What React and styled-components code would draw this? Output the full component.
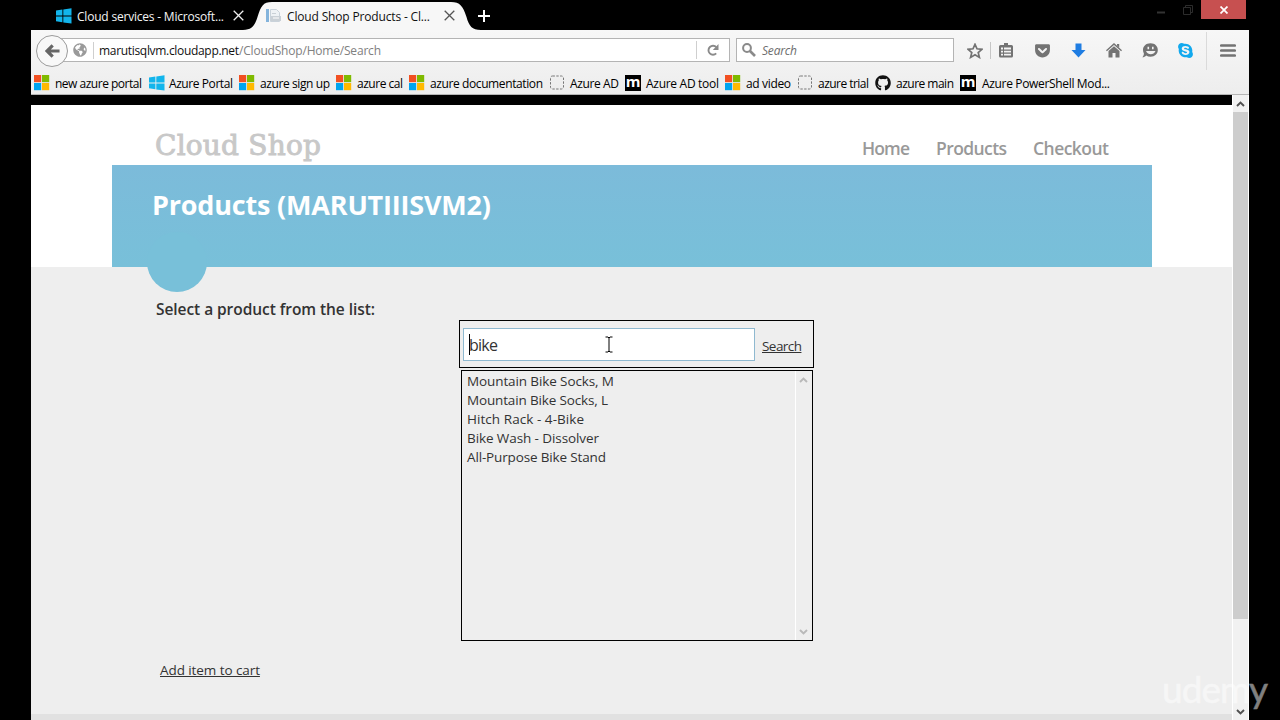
import React, { useLayoutEffect, useRef } from 'react';
import styled, { createGlobalStyle } from 'styled-components';
import { FaGithub, FaSkype, FaGetPocket, FaGlobeAmericas } from 'react-icons/fa';

const GlobalStyle = createGlobalStyle`
  * { box-sizing: border-box; }
  html, body { margin: 0; padding: 0; background: #000; overflow: hidden; }
  body { font-family: "Open Sans", "Noto Sans", sans-serif; font-size: 12px; color: #000; }
  svg { display: block; flex: none; }
`;

/* ---------- fitted text: tracks its letters to fill a given width ---------- */
const Track = styled.span`
  display: inline-block;
  white-space: pre;
  flex: none;
  text-decoration: inherit;
`;

function Fit({ width, children }) {
  const ref = useRef(null);
  useLayoutEffect(() => {
    const el = ref.current;
    el.style.letterSpacing = '0px';
    el.style.width = 'auto';
    const natural = el.getBoundingClientRect().width;
    const gaps = el.textContent.length - 1;
    el.style.letterSpacing = `${(width - natural) / gaps}px`;
    el.style.width = `${width}px`;
  }, [width]);
  return <Track ref={ref}>{children}</Track>;
}

/* ---------- browser window ---------- */
const Screen = styled.div`
  position: relative;
  width: 1280px;
  height: 720px;
  padding-left: 31px;
  background: #000;
  overflow: hidden;
`;
const Window = styled.div`
  width: 1218px;
  height: 720px;
  display: flex;
  flex-direction: column;
`;
const TitleBar = styled.div`
  height: 30px;
  flex: none;
  display: flex;
  align-items: flex-start;
`;
const Tab = styled.div`
  position: relative;
  display: flex;
  align-items: center;
  height: 31px;
  width: ${(p) => p.$width}px;
  padding-left: ${(p) => p.$pad}px;
  color: ${(p) => (p.$active ? '#111' : '#f4f4f4')};
  > * { position: relative; }
`;
const TabShape = styled.svg`
  && { position: absolute; left: 0; top: 2px; }
`;
const TabTitle = styled.div`
  width: ${(p) => p.$width}px;
  flex: none;
  margin-left: 5px;
  padding-top: 1px;
  line-height: 31px;
`;
const NewTab = styled.div`
  width: 14px;
  height: 31px;
  display: flex;
  align-items: center;
  margin-right: auto;
  margin-left: -3px;
`;
const WindowControls = styled.div`
  display: flex;
  height: 19px;
  margin-right: 3px;
`;
const Control = styled.div`
  width: ${(p) => p.$width}px;
  height: 19px;
  display: flex;
  align-items: center;
  justify-content: center;
  background: ${(p) => p.$bg || 'transparent'};
`;

const Chrome = styled.div`
  flex: none;
  height: 65px;
  background: linear-gradient(#f7f7f7, #ededed);
  border-bottom: 1px solid #b5b5b5;
`;
const NavRow = styled.div`
  height: 41px;
  display: flex;
  align-items: center;
  padding-left: 5px;
`;
const BackButton = styled.div`
  position: relative;
  z-index: 1;
  width: 32px;
  height: 32px;
  flex: none;
  border-radius: 50%;
  border: 1px solid #9b9b9b;
  background: #f8f8f8;
  display: flex;
  align-items: center;
  justify-content: center;
`;
const Field = styled.div`
  width: ${(p) => p.$width}px;
  height: 24px;
  flex: none;
  margin-top: -1px;
  border: 1px solid #b4b4b4;
  background: #fff;
  display: flex;
  align-items: center;
`;
const UrlBar = styled(Field)`
  margin-left: -8px;
  margin-right: 6px;
  padding-left: 12px;
`;
const Rule = styled.div`
  width: 1px;
  height: ${(p) => p.$height}px;
  background: ${(p) => p.$color || '#cfcfcf'};
  flex: none;
`;
const UrlRule = styled(Rule)`
  margin-left: 6px;
`;
const UrlText = styled.div`
  display: flex;
  width: 602px;
  flex: none;
  padding: 1px 0 0 5px;
  line-height: 22px;
  color: #111;
`;
const UrlPath = styled.span`
  color: #808080;
`;
const Placeholder = styled.span`
  margin: 1px 0 0 3px;
  font-style: italic;
  color: #6d6d6d;
`;
const Tools = styled.div`
  display: flex;
  align-items: center;
  height: 41px;
`;
const Tool = styled.div`
  width: ${(p) => p.$width || 36}px;
  flex: none;
  padding-left: ${(p) => p.$inset || 0}px;
  display: flex;
  justify-content: center;
  color: ${(p) => p.$color || '#737373'};
`;
const Bookmarks = styled.div`
  height: 23px;
  display: flex;
  align-items: center;
  padding-left: 3px;
`;
const Bookmark = styled.div`
  display: flex;
  align-items: center;
  width: ${(p) => p.$width}px;
  line-height: 23px;
`;
const BookmarkIcon = styled.div`
  width: ${(p) => p.$width}px;
  flex: none;
`;
const BookmarkLabel = styled.span`
  padding-top: 1px;
`;

/* ---------- web page ---------- */
const Viewport = styled.div`
  flex: 1;
  min-height: 0;
  display: flex;
`;
const Page = styled.div`
  width: 1201px;
  display: flex;
  flex-direction: column;
  background: #eee;
`;
const TopStrip = styled.div`
  height: 10px;
  flex: none;
  background: #000;
`;
const Header = styled.header`
  height: 162px;
  flex: none;
  padding: 0 80px 0 81px;
  background: #fff;
`;
const Masthead = styled.div`
  height: 60px;
  display: flex;
  justify-content: space-between;
  padding: 0 43px;
`;
const Brand = styled.div`
  padding-top: 20px;
  font: 400 28px/41px "DejaVu Serif", serif;
  color: #c8c8c8;
  -webkit-text-stroke: 0.9px #c8c8c8;
`;
const Menu = styled.nav`
  display: flex;
  gap: 26px;
  padding-top: 29px;
  font-size: 17.5px;
  font-weight: 600;
  line-height: 28px;
  color: #999;
`;
const Banner = styled.div`
  position: relative;
  height: 102px;
  padding: 20px 40px;
  background: linear-gradient(#7cbbda, #78c0d9);
`;
const BannerTitle = styled.h1`
  margin: 0;
  font-size: 27px;
  font-weight: 700;
  line-height: 40px;
  color: #fff;
  position: relative;
`;
const Bubble = styled.div`
  position: absolute;
  left: 35px;
  top: 67px;
  width: 60px;
  height: 60px;
  border-radius: 50%;
  background: #78c0d9;
`;
const Content = styled.main`
  flex: 1;
  display: flex;
  flex-direction: column;
  padding-top: 32px;
  color: #333;
`;
const Prompt = styled.div`
  margin-left: 125px;
  font-size: 15.5px;
  font-weight: 600;
  line-height: 20px;
`;
const SearchBox = styled.div`
  width: 355px;
  height: 48px;
  margin: 1px 0 0 428px;
  border: 1px solid #000;
  padding: 0 0 0 3px;
  display: flex;
  align-items: center;
`;
const SearchInput = styled.div`
  width: 292px;
  height: 33px;
  margin-top: 1px;
  border: 1px solid #8fb9d0;
  background: #fff;
  display: flex;
  align-items: center;
  padding-left: 5px;
  font-size: 16px;
  line-height: 31px;
`;
const Query = styled.span`
  padding-top: 2px;
`;
const Caret = styled.div`
  width: 1px;
  height: 21px;
  margin-right: -1px;
  background: #000;
`;
const Pointer = styled.svg`
  margin-left: 107px;
`;
const SearchLink = styled.a`
  margin: 4px 0 0 7px;
  font-size: 13.5px;
  line-height: 20px;
  text-decoration: underline;
  text-underline-offset: 1px;
`;
const ListBox = styled.div`
  width: 352px;
  height: 271px;
  margin: 2px 0 0 430px;
  border: 1px solid #000;
  display: flex;
`;
const Items = styled.div`
  width: 334px;
  padding: 1px 0 0 5px;
  border-right: 1px solid #fff;
  font-size: 13.5px;
`;
const Item = styled.div`
  height: 19px;
  line-height: 19px;
`;
const ListScroll = styled.div`
  flex: 1;
  display: flex;
  flex-direction: column;
  align-items: center;
  justify-content: space-between;
  padding: 6px 2px 5px 0;
`;
const CartLink = styled.a`
  margin: 19px 0 0 129px;
  font-size: 13.5px;
  line-height: 20px;
  text-decoration: underline;
  text-underline-offset: 1px;
`;
const FooterBand = styled.div`
  height: 6px;
  margin-top: auto;
  background: #e1e1e1;
`;
const PageScroll = styled.div`
  width: 17px;
  display: flex;
  flex-direction: column;
  align-items: center;
  background: #f1f1f1;
  border-left: 1px solid #fff;
  border-right: 1px solid #fff;
`;
const ScrollArrow = styled.div`
  height: 17px;
  display: flex;
  align-items: center;
`;
const Thumb = styled.div`
  width: 15px;
  height: 507px;
  margin-bottom: auto;
  background: #cdcdcd;
`;
const Watermark = styled.div`
  position: absolute;
  left: 1162px;
  top: 665px;
  font: 400 37px/48px Lato, sans-serif;
  color: #fff;
  -webkit-text-stroke: 0.5px #fff;
  opacity: 0.5;
`;

/* ---------- icons ---------- */
const WindowsIcon = () => (
  <svg width="16" height="16" viewBox="0 0 16 16" fill="#12b5ec">
    <path d="M0 2.6 6.4 1.6V7.5H0zM7.3 1.5 15.5.3V7.5H7.3zM0 8.4H6.4V14.2L0 13.3zM7.3 8.4H15.5V15.6L7.3 14.4z" />
  </svg>
);
const MicrosoftIcon = () => (
  <svg width="16" height="16" viewBox="0 0 16 16">
    <path fill="#f25022" d="M0 0h7.2v7.2H0z" />
    <path fill="#7fba00" d="M8 0h7.2v7.2H8z" />
    <path fill="#00a4ef" d="M0 8h7.2v7.2H0z" />
    <path fill="#ffb900" d="M8 8h7.2v7.2H8z" />
  </svg>
);
const BlankIcon = () => (
  <svg width="16" height="16" viewBox="0 0 16 16">
    <rect x="0.5" y="1" width="13" height="13" rx="2" fill="none" stroke="#777" strokeDasharray="2.4 1.4" />
  </svg>
);
const MBadge = styled.div`
  width: 16px;
  height: 16px;
  background: #000;
  color: #fff;
  font: 700 15px/13px "Open Sans", sans-serif;
  display: flex;
  justify-content: center;
`;
const DocIcon = () => (
  <svg width="16" height="16" viewBox="0 0 16 16">
    <path fill="#84b4dc" d="M0 1h3v13H0z" />
    <path fill="#eef2f5" stroke="#c9d2da" d="M4.5 1.5h6l3 3v9h-9z" />
    <path fill="#c9d0d6" d="M6 5h4v1H6zM5 8h10v5H5z" />
    <path fill="#fff" d="M7 9.5h6v1H7z" />
  </svg>
);
const CloseX = ({ color, size = 11, weight = 1.3 }) => (
  <svg width={size} height={size} viewBox="0 0 11 11" stroke={color} strokeWidth={weight}>
    <path d="M.7.7 10.3 10.3M10.3.7.7 10.3" />
  </svg>
);
const Chevron = ({ down, color }) => (
  <svg width="9" height="6" viewBox="0 0 9 6" fill="none" stroke={color} strokeWidth="1.9">
    <path d={down ? 'M1 1 4.5 4.5 8 1' : 'M1 5 4.5 1.5 8 5'} />
  </svg>
);

const ICONS = {
  ms: <MicrosoftIcon />,
  win: <WindowsIcon />,
  blank: <BlankIcon />,
  m: <MBadge>m</MBadge>,
  github: <FaGithub size={16} color="#111" />,
};

const bookmarks = [
  ['ms', 'new azure portal', 115, 21, 87],
  ['win', 'Azure Portal', 90, 20, 64],
  ['ms', 'azure sign up', 97, 21, 70],
  ['ms', 'azure cal', 73, 21, 46],
  ['ms', 'azure documentation', 141, 21, 113],
  ['blank', 'Azure AD', 75, 20, 49],
  ['m', 'Azure AD tool', 100, 21, 73],
  ['ms', 'ad video', 73, 21, 45],
  ['blank', 'azure trial', 77, 20, 51],
  ['github', 'azure main', 85, 21, 58],
  ['m', 'Azure PowerShell Mod...', 160, 22, 128],
];

const products = [
  ['Mountain Bike Socks, M', 147],
  ['Mountain Bike Socks, L', 141],
  ['Hitch Rack - 4-Bike', 117],
  ['Bike Wash - Dissolver', 132],
  ['All-Purpose Bike Stand', 139],
];

export default function App() {
  return (
    <Screen>
      <GlobalStyle />
      <Window>
        <TitleBar>
          <Tab $width={212} $pad={25}>
            <WindowsIcon />
            <TabTitle $width={156}><Fit width={147}>Cloud services - Microsoft...</Fit></TabTitle>
            <CloseX color="#eee" />
          </Tab>
          <Tab $width={238} $pad={23} $active>
            <TabShape width="238" height="28" viewBox="0 0 238 28">
              <path fill="#f7f7f7" d="M0 28C9 28 11.5 24 14.5 15C18 4 20 0 29 0H208C217 0 220 4 223.5 15C226 24 229 28 238 28Z" />
            </TabShape>
            <DocIcon />
            <TabTitle $width={157}><Fit width={143}>Cloud Shop Products - Cl...</Fit></TabTitle>
            <CloseX color="#555" />
          </Tab>
          <NewTab>
            <svg width="12" height="12" viewBox="0 0 12 12" fill="#fff"><path d="M5 0h2v12H5zM0 5h12v2H0z" /></svg>
          </NewTab>
          <WindowControls>
            <Control $width={26}>
              <svg width="8" height="8" viewBox="0 0 8 8"><path fill="#333" d="M0 5.5h8v2H0z" /></svg>
            </Control>
            <Control $width={27}>
              <svg width="10" height="10" viewBox="0 0 10 10" fill="none" stroke="#2c2c2c"><path d="M.5 2.5h7v7h-7zM2.5 2V.5h7v7H8" /></svg>
            </Control>
            <Control $width={45} $bg="#c75050"><CloseX color="#fff" size={8} weight={2.4} /></Control>
          </WindowControls>
        </TitleBar>

        <Chrome>
          <NavRow>
            <BackButton>
              <svg width="15" height="14" viewBox="0 0 16 14" fill="none" stroke="#666" strokeWidth="3.4">
                <path d="M8.2 1 2.2 7 8.2 13M2.5 7H15.5" />
              </svg>
            </BackButton>
            <UrlBar $width={670}>
              <FaGlobeAmericas size={14} color="#9a9a9a" />
              <UrlRule $height={17} />
              <UrlText>
                <Fit width={140}>marutisqlvm.cloudapp.net</Fit>
                <UrlPath><Fit width={142}>/CloudShop/Home/Search</Fit></UrlPath>
              </UrlText>
              <Rule $height={18} />
              <Tool $width={31}>
                <svg width="14" height="14" viewBox="0 0 14 14" fill="none" stroke="#8a8a8a" strokeWidth="1.9">
                  <path d="M10.2 10.4A4.5 4.5 0 1 1 10.3 4.2" />
                  <path fill="#8a8a8a" stroke="none" d="M12.5 1v6H6.8z" />
                </svg>
              </Tool>
            </UrlBar>
            <Field $width={218}>
              <Tool $width={22} $inset={2}>
                <svg width="14" height="14" viewBox="0 0 14 14" fill="none" stroke="#8a8a8a">
                  <circle cx="5" cy="5" r="3.9" strokeWidth="2" />
                  <path d="M8 8 13 13" strokeWidth="2.6" />
                </svg>
              </Tool>
              <Placeholder><Fit width={35}>Search</Fit></Placeholder>
            </Field>
            <Tools>
              <Tool $width={36} $inset={6}>
                <svg width="16" height="16" viewBox="0 0 16 16" fill="none" stroke="#737373" strokeWidth="1.7">
                  <path d="M8 1.3 10 5.8 15 6.3 11.2 9.5 12.4 14.4 8 11.8 3.6 14.4 4.8 9.5 1 6.3 6 5.8Z" />
                </svg>
              </Tool>
              <Rule $height={17} $color="#c6c6c6" />
              <Tool $width={30}>
                <svg width="14" height="15" viewBox="0 0 14 15">
                  <path fill="#737373" fillRule="evenodd" d="M5 2V0h4v2h3.5Q14 2 14 3.5V13Q14 14.5 12.5 14.5H1.5Q0 14.5 0 13V3.5Q0 2 1.5 2ZM2 4.5v2h2v-2zM5 4.5v2h7v-2zM2 7.7v1.8h2V7.7zM5 7.7v1.8h7V7.7zM2 10.7v1.8h2v-1.8zM5 10.7v1.8h7v-1.8z" />
                </svg>
              </Tool>
              <Tool $width={42}><FaGetPocket size={17} /></Tool>
              <Tool $width={30}>
                <svg width="15" height="15" viewBox="0 0 15 15" fill="#1f7de2"><path d="M4.5.5h6v6.5H14.5L7.5 14.5.5 7h4z" /></svg>
              </Tool>
              <Tool $width={42}>
                <svg width="16" height="15" viewBox="0 0 16 15" fill="#737373">
                  <path d="M8 0 16 7.3 15.1 8.2 8 1.9.9 8.2 0 7.3ZM11 1h2.2v3.5L11 2.5z" />
                  <path d="M8 3.2 13.5 8V14.5H9.5V10H6.5V14.5H2.5V8Z" />
                </svg>
              </Tool>
              <Tool $width={30}>
                <svg width="16" height="15" viewBox="0 0 16 15">
                  <path fill="#737373" d="M8.5.3C13 .3 15.8 3.2 15.8 7S13 13.7 8.5 13.7C6.8 13.7 5.4 13.3 4.2 12.5 3.3 13.7 2 14.3.3 14.3 1.4 13.3 1.9 12 1.9 10.5 1.3 9.5 1 8.3 1 7 1 3.2 4 .3 8.5.3Z" />
                  <path fill="#f2f2f2" d="M5.5 3.8h1.6v2.5H5.5zM10 3.8h1.6v2.5h-1.6zM4 8h9.5C12.5 10.3 10.7 11.3 8.8 11.3S5 10.3 4 8Z" />
                </svg>
              </Tool>
              <Tool $width={41} $color="#12a9ee"><FaSkype size={17} /></Tool>
              <Rule $height={38} $color="#dadada" />
              <Tool $width={42}>
                <svg width="16" height="13" viewBox="0 0 16 13" stroke="#737373" strokeWidth="2.7" strokeLinecap="round">
                  <path d="M1.3 1.5H14.7M1.3 6.5H14.7M1.3 11.5H14.7" />
                </svg>
              </Tool>
            </Tools>
          </NavRow>
          <Bookmarks>
            {bookmarks.map(([icon, label, width, iconWidth, textWidth]) => (
              <Bookmark key={label} $width={width}>
                <BookmarkIcon $width={iconWidth}>{ICONS[icon]}</BookmarkIcon>
                <BookmarkLabel><Fit width={textWidth}>{label}</Fit></BookmarkLabel>
              </Bookmark>
            ))}
          </Bookmarks>
        </Chrome>

        <Viewport>
          <Page>
            <TopStrip />
            <Header>
              <Masthead>
                <Brand><Fit width={166}>Cloud Shop</Fit></Brand>
                <Menu>
                  <Fit width={48}>Home</Fit>
                  <Fit width={71}>Products</Fit>
                  <Fit width={76}>Checkout</Fit>
                </Menu>
              </Masthead>
              <Banner>
                <Bubble />
                <BannerTitle><Fit width={339}>Products (MARUTIIISVM2)</Fit></BannerTitle>
              </Banner>
            </Header>
            <Content>
              <Prompt><Fit width={219}>Select a product from the list:</Fit></Prompt>
              <SearchBox>
                <SearchInput>
                  <Caret />
                  <Query><Fit width={29}>bike</Fit></Query>
                  <Pointer width="8" height="17" viewBox="0 0 8 17" fill="none" stroke="#000">
                    <path d="M.5 1h2.5L4 2 5 1H7.5M4 2V15M.5 16H3L4 15 5 16H7.5" />
                  </Pointer>
                </SearchInput>
                <SearchLink><Fit width={40}>Search</Fit></SearchLink>
              </SearchBox>
              <ListBox>
                <Items>
                  {products.map(([name, width]) => (
                    <Item key={name}><Fit width={width}>{name}</Fit></Item>
                  ))}
                </Items>
                <ListScroll>
                  <Chevron color="#b9b9b9" />
                  <Chevron color="#b9b9b9" down />
                </ListScroll>
              </ListBox>
              <CartLink><Fit width={100}>Add item to cart</Fit></CartLink>
              <FooterBand />
            </Content>
          </Page>
          <PageScroll>
            <ScrollArrow><Chevron color="#505050" /></ScrollArrow>
            <Thumb />
            <ScrollArrow><Chevron color="#505050" down /></ScrollArrow>
          </PageScroll>
        </Viewport>
      </Window>
      <Watermark><Fit width={106}>udemy</Fit></Watermark>
    </Screen>
  );
}
